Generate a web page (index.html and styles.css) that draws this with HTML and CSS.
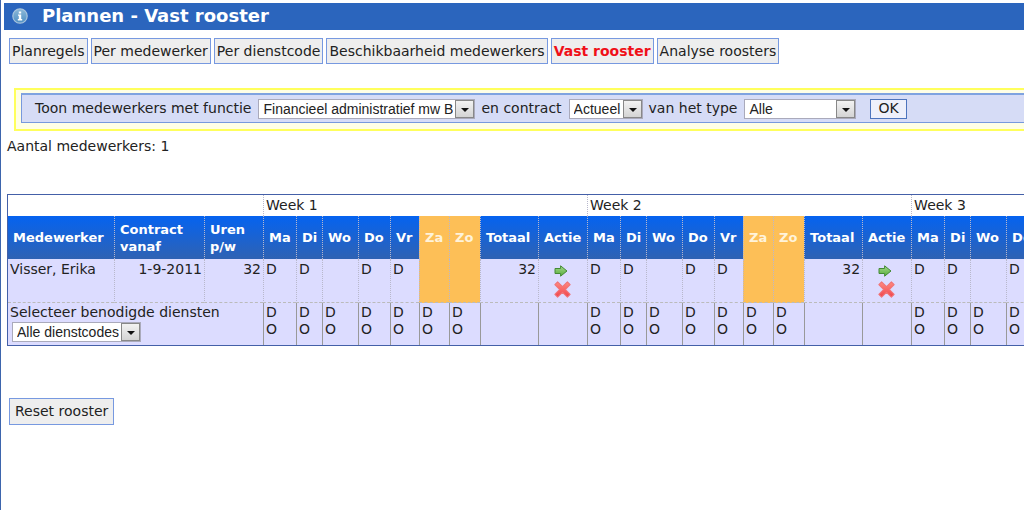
FILE: index.html
```html
<!DOCTYPE html>
<html lang="nl">
<head>
<meta charset="utf-8">
<title>Plannen - Vast rooster</title>
<link rel="stylesheet" href="styles.css">
</head>
<body>
<header class="titlebar">
  <svg class="info" viewBox="0 0 16 16" aria-hidden="true">
    <defs><linearGradient id="ig" x1="0" y1="0" x2="0" y2="1"><stop offset="0" stop-color="#8db9d8"/><stop offset="1" stop-color="#4f8fc4"/></linearGradient></defs>
    <circle cx="8" cy="8" r="7.2" fill="url(#ig)" stroke="#a9c4dc" stroke-width="1.2"/>
    <path d="M6.8 3.4h2.4v2H6.8zM6 6.5h3.2v4.6h1v1.4H5.8v-1.4h1V7.8H6z" fill="#fff"/>
  </svg>
  <h1>Plannen - Vast rooster</h1>
</header>
<nav class="tabs">
  <a class="tab" href="#">Planregels</a>
  <a class="tab" href="#">Per medewerker</a>
  <a class="tab" href="#">Per dienstcode</a>
  <a class="tab" href="#">Beschikbaarheid medewerkers</a>
  <a class="tab active" href="#" aria-current="page">Vast rooster</a>
  <a class="tab" href="#">Analyse roosters</a>
</nav>
<div class="filter-frame">
  <form class="filter">
    <label for="functie">Toon medewerkers met functie</label>
    <span class="picker"><select id="functie"><option>Financieel administratief mw B</option></select></span>
    <label for="contract">en contract</label>
    <span class="picker"><select id="contract"><option>Actueel</option></select></span>
    <label for="type">van het type</label>
    <span class="picker wide"><select id="type"><option>Alle</option></select></span>
    <button class="ok" type="button">OK</button>
  </form>
</div>
<p class="count">Aantal medewerkers: 1</p>
<div class="roster-wrap">
  <table class="roster" id="roster"></table>
</div>
<button class="reset" type="button">Reset rooster</button>
<svg width="0" height="0" class="defs" aria-hidden="true">
  <defs>
    <linearGradient id="gg" x1="0" y1="0" x2="0" y2="1"><stop offset="0" stop-color="#a5d88c"/><stop offset="1" stop-color="#55ad38"/></linearGradient>
    <linearGradient id="rg" x1="0" y1="0" x2="0" y2="1"><stop offset="0" stop-color="#ff8a80"/><stop offset="1" stop-color="#f0454d"/></linearGradient>
    <symbol id="go" viewBox="0 0 14 12"><path d="M1 3.5h5.6V.8L13 6l-6.4 5.2V8.5H1z" fill="url(#gg)" stroke="#448a36" stroke-linejoin="round"/></symbol>
    <symbol id="del" viewBox="0 0 16 16"><path d="M3.4.8 8 5.4 12.6.8l2.6 2.6L10.8 8l4.4 4.6-2.6 2.6L8 10.7l-4.6 4.5-2.6-2.6L5.2 8 .8 3.4z" fill="url(#rg)" stroke="#ef7478" stroke-linejoin="round"/></symbol>
  </defs>
</svg>
<script src="roster.js"></script>
</body>
</html>
```

FILE: styles.css
```css
* { box-sizing: border-box; }
html { height: 100%; }
body {
  margin: 0;
  min-height: 100%;
  padding-top: 3px;
  border-left: 1px solid #3d65ad;
  background: #fff;
  color: #222;
  font: 14px/17px "DejaVu Sans", sans-serif;
  overflow-x: hidden;
}
.titlebar {
  display: flex;
  align-items: center;
  gap: 14px;
  height: 27px;
  margin-left: 3px;
  padding: 0 0 2px 8px;
  background: #2b65bd;
  color: #fff;
}
.titlebar h1 { margin: 0; font-size: 18px; line-height: 24px; }
.info { width: 16px; height: 16px; }
.tabs { display: flex; gap: 3px; margin: 8px 0 0 8px; }
.tab, .reset {
  border: 1px solid #7799e0;
  background: #eee;
  color: #222;
  font: inherit;
  text-decoration: none;
  white-space: nowrap;
}
.tab { height: 26px; padding: 4px 2px; }
.tab.active { color: #f01018; font-weight: bold; }
.filter-frame {
  margin: 24px 0 0 13px;
  padding: 3px 0 6px 5px;
  border: 2px solid #ffff5c;
  border-right: 0;
  background: #ffffe6;
}
.filter {
  display: flex;
  align-items: center;
  height: 30px;
  padding-left: 13px;
  border: 1px solid #7799dd;
  border-top: 2px solid #7fa3e0;
  border-right: 0;
  background: #d6dcf6;
  white-space: nowrap;
}
.picker { position: relative; display: inline-flex; margin: 0 6px 0 7px; }
.picker select {
  appearance: none;
  width: 100%;
  height: 20px;
  margin: 0;
  padding: 0 21px 0 4px;
  border: 1px solid #aab;
  border-radius: 0;
  background: #fff;
  color: #222;
  font: 14px/18px "Liberation Sans", Arial, sans-serif;
}
.picker::before {
  content: "";
  position: absolute;
  top: 1px;
  right: 1px;
  bottom: 1px;
  width: 17px;
  border: 1px solid #888;
  background: linear-gradient(#f2f2f2, #d4d4d4);
  pointer-events: none;
}
.picker::after {
  content: "";
  position: absolute;
  top: 9px;
  right: 6px;
  border: 4px solid transparent;
  border-top-color: #111;
  border-bottom: 0;
  pointer-events: none;
}
.picker.wide { width: 112px; }
.ok {
  height: 20px;
  margin-left: 8px;
  padding: 0 7px;
  border: 1px solid #4d74bd;
  background: #eef0fb;
  color: #222;
  font: inherit;
}
.count { margin: 7px 0 0 6px; }
.roster-wrap { margin: 39px 0 52px 6px; overflow: hidden; }
.roster {
  width: 1228px;
  table-layout: fixed;
  border: 1px solid #4460a8;
  border-spacing: 0;
}
.c-name { width: 106px; }
.c-from { width: 90px; }
.c-hours { width: 59px; }
.c-ma { width: 33px; }
.c-di { width: 26px; }
.c-wo { width: 36px; }
.c-do { width: 32px; }
.c-vr { width: 29px; }
.c-za { width: 30px; }
.c-zo { width: 31px; }
.c-total { width: 58px; }
.c-action { width: 49px; }
.roster th, .roster td {
  padding: 2px;
  border-left: 1px dotted #b8b8cc;
  text-align: left;
  vertical-align: top;
}
.roster tr > :first-child { border-left: 0; }
.weeks th { height: 21px; font-weight: normal; }
.roster .days th {
  height: 43px;
  padding: 0 5px;
  background: linear-gradient(#0563f0, #2f62b3);
  color: #fff;
  font-size: 13px;
  vertical-align: middle;
}
.roster .days .weekend, .roster .person .weekend { background: #fdbf57; }
.roster .days .weekend { color: #fff3da; }
.person td, .needs td { background: #dcdcff; }
.roster .person td { height: 44px; border-bottom: 1px dashed #bbb; }
.roster .num { text-align: right; }
.roster .needs td { height: 42px; padding-top: 1px; border-left: 1px solid #999; }
.roster .needs td:first-child { border-left: 0; }
.needs label { display: block; }
.needs .picker { margin: 1px 0 0 2px; vertical-align: top; }
.icons { display: flex; flex-direction: column; gap: 4px; padding: 4px 0 0 13px; }
.icon { display: block; padding: 0; border: 0; background: none; line-height: 0; width: 16px; }
.icon svg { display: block; }
.go { width: 14px; height: 12px; }
.del { width: 17px; height: 17px; }
.reset { display: block; height: 27px; margin-left: 8px; padding: 4px 5px; }
.defs { position: absolute; }
```

FILE: roster.js
```js
const days = ["Ma", "Di", "Wo", "Do", "Vr", "Za", "Zo"];
const shifts = ["D", "D", "", "D", "D", "", ""];
const weeks = [1, 2, 3];
const each = (fn) => weeks.map(fn).join("");
const weekend = (i) => (i > 4 ? ' class="weekend"' : "");

const cols = '<col class="c-name"><col class="c-from"><col class="c-hours">' +
  each(() => days.map((d) => `<col class="c-${d.toLowerCase()}">`).join("") +
    '<col class="c-total"><col class="c-action">');

const weekRow = '<th colspan="3"></th>' + each((w) => `<th colspan="9">Week ${w}</th>`);

const dayRow = "<th>Medewerker</th><th>Contract vanaf</th><th>Uren p/w</th>" +
  each(() => days.map((d, i) => `<th${weekend(i)}>${d}</th>`).join("") +
    "<th>Totaal</th><th>Actie</th>");

const actions = '<div class="icons">' +
  '<button type="button" class="icon" aria-label="Kopieer"><svg class="go"><use href="#go"/></svg></button>' +
  '<button type="button" class="icon" aria-label="Verwijder"><svg class="del"><use href="#del"/></svg></button></div>';

const personRow = '<td>Visser, Erika</td><td class="num">1-9-2011</td><td class="num">32</td>' +
  each(() => shifts.map((s, i) => `<td${weekend(i)}>${s}</td>`).join("") +
    `<td class="num">32</td><td>${actions}</td>`);

const needsRow = '<td colspan="3"><label for="codes">Selecteer benodigde diensten</label>' +
  '<span class="picker"><select id="codes"><option>Alle dienstcodes</option></select></span></td>' +
  each(() => days.map(() => "<td>D<br>O</td>").join("") + "<td></td><td></td>");

document.getElementById("roster").innerHTML =
  `<colgroup>${cols}</colgroup>` +
  `<thead><tr class="weeks">${weekRow}</tr><tr class="days">${dayRow}</tr></thead>` +
  `<tbody><tr class="person">${personRow}</tr><tr class="needs">${needsRow}</tr></tbody>`;
```
